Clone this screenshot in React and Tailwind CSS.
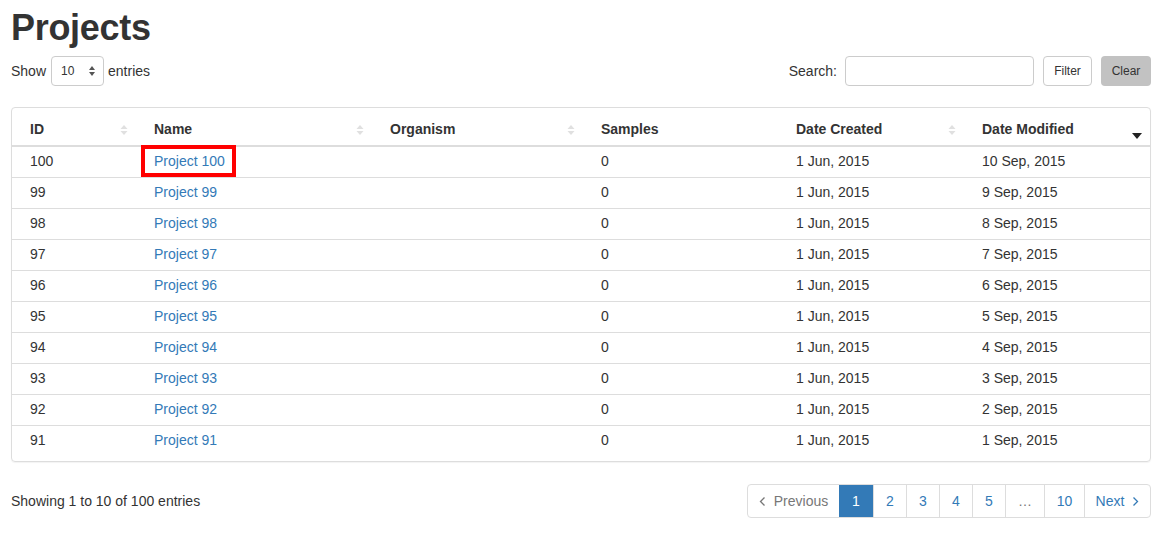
import React from 'react';

const rows = [100, 99, 98, 97, 96, 95, 94, 93, 92, 91].map((id, i) => ({
  id,
  name: `Project ${id}`,
  samples: 0,
  created: '1 Jun, 2015',
  modified: `${10 - i} Sep, 2015`,
}));

// 未ソート時の上下アイコン
function SortBoth() {
  return (
    <svg width="8" height="12" viewBox="0 0 8 12" className="block">
      <path d="M4 1 L7.5 5 H0.5 Z" fill="#e0e0e0" />
      <path d="M4 11 L7.5 7 H0.5 Z" fill="#e0e0e0" />
    </svg>
  );
}

function SortDesc() {
  return (
    <svg width="10" height="6" viewBox="0 0 10 6" className="block">
      <path d="M0 0 H10 L5 6 Z" fill="#222" />
    </svg>
  );
}

function Chevron({ dir }) {
  return (
    <svg width="7" height="11" viewBox="0 0 7 11" className="block">
      <path
        d={dir === 'left' ? 'M5.5 1.5 L1.5 5.5 L5.5 9.5' : 'M1.5 1.5 L5.5 5.5 L1.5 9.5'}
        fill="none"
        stroke="currentColor"
        strokeWidth="1.3"
      />
    </svg>
  );
}

const cols = [
  { label: 'ID', w: 'w-[124px]', sort: 'both' },
  { label: 'Name', w: 'w-[236px]', sort: 'both' },
  { label: 'Organism', w: 'w-[211px]', sort: 'both' },
  { label: 'Samples', w: 'w-[195px]', sort: null },
  { label: 'Date Created', w: 'w-[186px]', sort: 'both' },
  { label: 'Date Modified', w: 'w-[186px]', sort: 'desc' },
];

export default function App() {
  return (
    <div className="min-h-[534px] bg-white pl-[11px] pr-[16px] pt-[8px] text-[14px] text-[#333] font-['Liberation_Sans',Arial,sans-serif]">
      <h1 className="text-[36px] font-bold leading-[40px] tracking-[-0.3px] text-[#333]">Projects</h1>

      <div className="mt-[8px] flex items-center justify-between h-[30px]">
        <div className="flex items-center">
          <span>Show</span>
          <div className="ml-[5px] mr-[4px] flex h-[30px] w-[53px] items-center justify-between rounded-[4px] border border-[#ccc] pl-[9px] pr-[8px] text-[12px]">
            <span>10</span>
            <svg width="6" height="10" viewBox="0 0 6 10">
              <path d="M3 0 L6 4 H0 Z" fill="#555" />
              <path d="M3 10 L6 6 H0 Z" fill="#555" />
            </svg>
          </div>
          <span>entries</span>
        </div>
        <div className="flex items-center">
          <span className="mr-[8px]">Search:</span>
          <div className="h-[30px] w-[189px] rounded-[4px] border border-[#ccc]" />
          <button className="ml-[9px] h-[30px] w-[49px] rounded-[4px] border border-[#ccc] bg-white text-[12px] text-[#333]">
            Filter
          </button>
          <button className="ml-[9px] h-[30px] w-[50px] rounded-[4px] bg-[#c2c2c2] text-[12px] text-[#333]">
            Clear
          </button>
        </div>
      </div>

      <div className="mt-[21px] rounded-[4px] border border-[#ddd] pb-[5px] shadow-[0_1px_1px_rgba(0,0,0,0.05)]">
        <table className="w-full table-fixed border-collapse">
          <colgroup>
            {cols.map(c => (
              <col key={c.label} className={c.w} />
            ))}
          </colgroup>
          <thead>
            <tr className="h-[38px] border-b-2 border-[#ddd]">
              {cols.map(c => (
                <th key={c.label} className="relative pl-[18px] pb-[5px] align-bottom text-left font-bold">
                  {c.label}
                  {c.sort === 'both' && (
                    <span className="absolute right-[8px] top-[16px]">
                      <SortBoth />
                    </span>
                  )}
                  {c.sort === 'desc' && (
                    <span className="absolute right-[8px] top-[25px]">
                      <SortDesc />
                    </span>
                  )}
                </th>
              ))}
            </tr>
          </thead>
          <tbody>
            {rows.map((r, i) => (
              <tr key={r.id} className={`h-[31px] ${i < rows.length - 1 ? 'border-b border-[#ddd]' : ''}`}>
                <td className="pl-[18px]">{r.id}</td>
                <td className="pl-[18px]">
                  <a className="relative text-[#337ab7]">
                    {r.name}
                    {i === 0 && (
                      <span className="absolute -left-[13px] -right-[11px] -top-[8px] -bottom-[8px] border-4 border-[#ff0000]" />
                    )}
                  </a>
                </td>
                <td className="pl-[18px]"></td>
                <td className="pl-[18px]">{r.samples}</td>
                <td className="pl-[18px]">{r.created}</td>
                <td className="pl-[18px]">{r.modified}</td>
              </tr>
            ))}
          </tbody>
        </table>
      </div>

      <div className="mt-[22px] flex items-center justify-between">
        <span>Showing 1 to 10 of 100 entries</span>
        <div className="flex h-[34px] overflow-hidden rounded-[4px] border border-[#ddd] text-[14px]">
          <span className="flex w-[91px] items-center justify-center gap-[8px] text-[#777]">
            <Chevron dir="left" />
            Previous
          </span>
          <span className="flex w-[34px] items-center justify-center bg-[#337ab7] text-white">1</span>
          {['2', '3', '4', '5'].map(n => (
            <span key={n} className="flex w-[33px] items-center justify-center border-l border-[#ddd] text-[#337ab7]">
              {n}
            </span>
          ))}
          <span className="flex w-[39px] items-center justify-center border-l border-[#ddd] text-[#777]">…</span>
          <span className="flex w-[40px] items-center justify-center border-l border-[#ddd] text-[#337ab7]">10</span>
          <span className="flex w-[66px] items-center justify-center gap-[8px] border-l border-[#ddd] text-[#337ab7]">
            Next
            <Chevron dir="right" />
          </span>
        </div>
      </div>
    </div>
  );
}
